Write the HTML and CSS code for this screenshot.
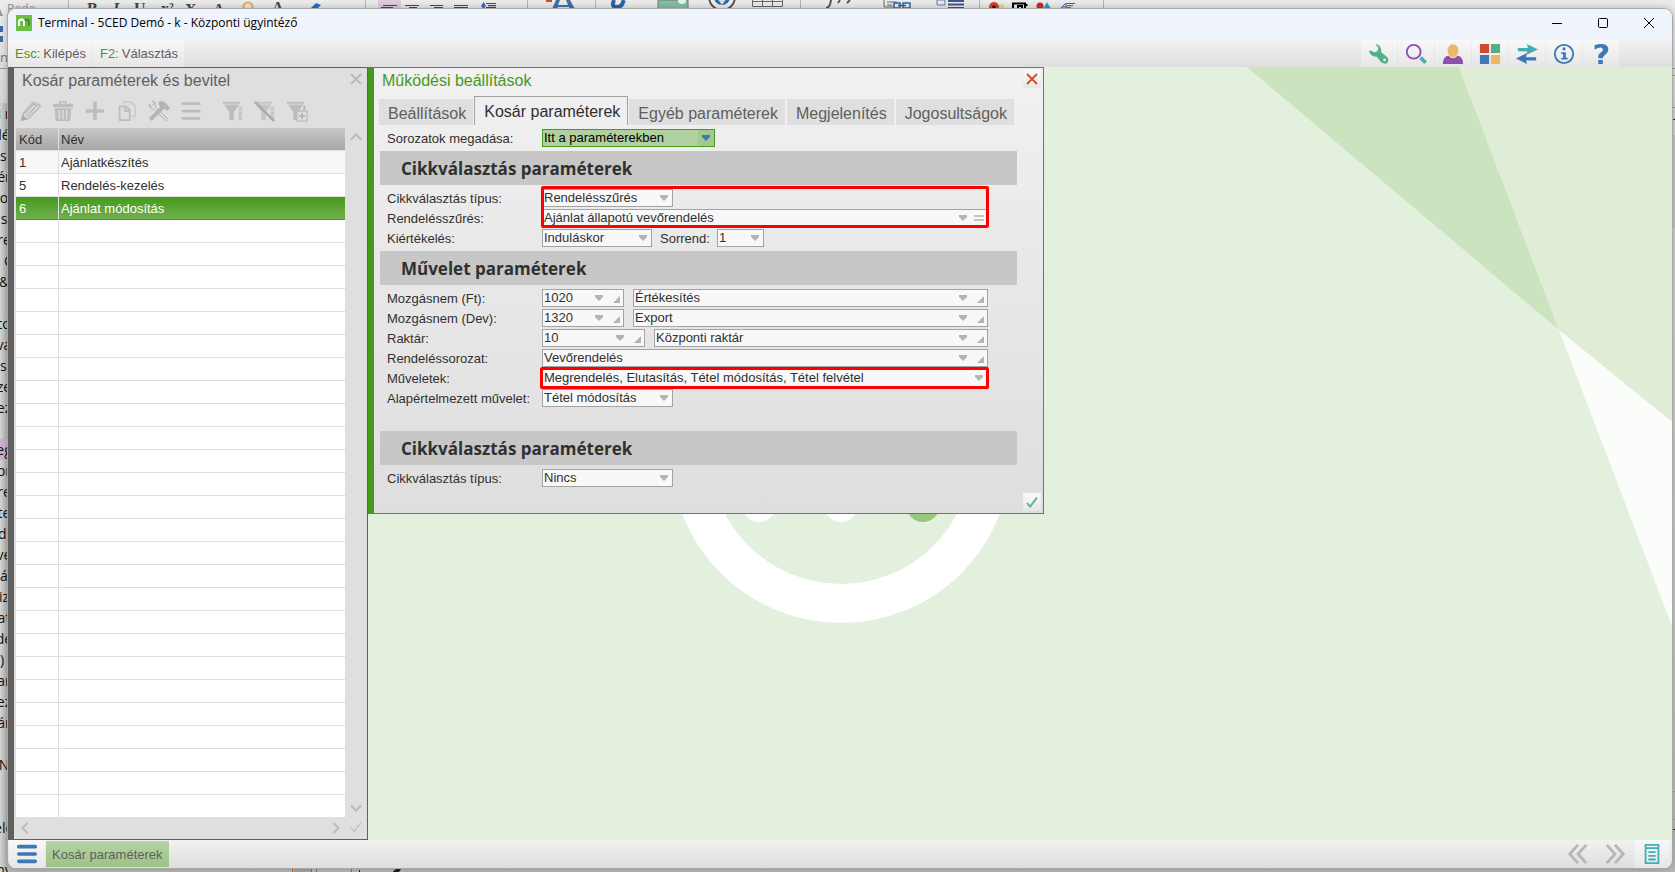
FILE: index.html
```html
<!DOCTYPE html>
<html lang="hu">
<head>
<meta charset="utf-8">
<title>Terminal - 5CED Demó - k - Központi ügyintéző</title>
<link rel="stylesheet" href="styles.css">
</head>
<body>
<svg class="symbols" aria-hidden="true">
  <symbol id="i-down" viewBox="0 0 16 16"><path d="M4 5h8v2l-4 4-4-4z" fill="currentColor"/></symbol>
  <symbol id="i-corner" viewBox="0 0 16 16"><path d="M6 13h7V6z" fill="currentColor"/></symbol>
  <symbol id="i-equals" viewBox="0 0 16 16"><path d="M3 6h10M3 10h10" stroke="currentColor" stroke-width="1.4"/></symbol>
  <symbol id="i-check" viewBox="0 0 18 18"><path d="M4 10l3.2 3.5L14 4.5" fill="none" stroke="currentColor" stroke-width="1.8"/></symbol>
  <symbol id="i-x" viewBox="0 0 18 18"><path d="M4 4l10 10M14 4L4 14" fill="none" stroke="currentColor" stroke-width="1.8"/></symbol>
  <symbol id="i-chev" viewBox="0 0 18 18"><path d="M4 11.5l5-5 5 5" fill="none" stroke="currentColor" stroke-width="2"/></symbol>
  <symbol id="i-funnel" viewBox="0 0 24 24"><path d="M1 2h19v2H1zM2 5h17l-6 8v9h-5v-9z" fill="currentColor"/></symbol>
</svg>

<div class="desktop" aria-hidden="true">
  <svg class="ribbon" width="1200" height="75" viewBox="0 0 1200 75">
    <rect x="378" y="0" width="23" height="9" fill="#dfcbdf"/>
    <g stroke="#b4b4b4"><path d="M68.500 0v9M365.500 0v9M527.500 0v9M595.500 0v9M800.500 0v9M979.500 0v9M1103.500 0v9"/></g>
    <path d="M0 9L3 16H0z" fill="#999"/>
    <g font-family="Liberation Serif, serif" font-size="16" font-weight="bold" fill="#444">
      <text x="87" y="14">B</text><text x="113" y="14" font-style="italic">I</text><text x="134" y="14">U</text><text x="161" y="14">x²</text><text x="185" y="15">X</text><text x="213" y="15">A</text><text x="272" y="13">A</text>
    </g>
    <text x="7" y="13" font-family="Open Sans, sans-serif" font-size="12" fill="#999" text-decoration="underline">Redo</text>
    <circle cx="248" cy="7" r="4.500" fill="none" stroke="#e6ad4d" stroke-width="2"/>
    <path d="M310 9l6-6 5 2-4 4z" fill="#2f6fc0"/>
    <g stroke="#3a4a72" stroke-width="1.200"><path d="M383 5.500h14M381 7.700h12M405 5.500h14M409 7.700h8M430 5.500h13M434 7.700h9M454 5.500h14M454 7.700h14M486 3.500h10M488 5.700h8M486 7.700h10"/></g>
    <path d="M481 6l2.500-4 2.500 4-2.500 3z" fill="#3f67c5"/>
    <path d="M546 0h6v2h-6z" fill="#d7472d"/>
    <path d="M552 9l4-9h4l-2 5h10l-2-5h4l5 9h-5l-1-2h-11l-1 2z" fill="#3a72ad"/>
    <path d="M614 0l-1 3q-1 4 4 4t6-5l1-2" fill="none" stroke="#2a66a5" stroke-width="4"/>
    <rect x="658" y="0" width="30" height="9" fill="#85bfa6" stroke="#777"/><circle cx="682" cy="0" r="4" fill="#e6f2ec"/>
    <circle cx="722" cy="-3" r="13" fill="#eee" stroke="#555" stroke-width="2"/><circle cx="722" cy="-3" r="8" fill="#2e6ca8"/><path d="M717-2l5 7 5-7z" fill="#ddd"/>
    <path d="M752.500-3v9.500h30V-3M752 1.500h31M762.500 0v6M772.500 0v6" fill="none" stroke="#666"/>
    <path d="M826 8q4 0 5-8M840 0l-2 3M850 0l-3 3" fill="none" stroke="#555" stroke-width="2"/>
    <path d="M884 0v7h9M887 2h10M887 5h5" stroke="#666" fill="none"/><path d="M894 3h6v5h-6zM903 3h7v5h-7zM898 5.500h8" fill="none" stroke="#2a66a5" stroke-width="1.500"/>
    <path d="M937 0h8v5h-8z" fill="none" stroke="#6d7ba5"/><path d="M948 1h16M948 4.500h16M948 7.800h16" stroke="#3f5688" stroke-width="1.800"/>
    <circle cx="994" cy="7" r="5" fill="#d7472d"/><circle cx="994" cy="7" r="1.800" fill="#500"/><path d="M999 4h5v5h-5z" fill="#e3dc95"/>
    <path d="M1013 9V3.500h12V9M1018 6h4v3h-4zM1026.500 4v2" fill="none" stroke="#000" stroke-width="2"/>
    <circle cx="1040" cy="6" r="3.500" fill="#c92b2b"/><path d="M1043 9l4-7 4 7z" fill="#2f9bd0"/>
    <path d="M1061 8l5-5v5M1062 7h5M1067 3.500h8M1067 5.700h6M1067 7.700h4" fill="none" stroke="#4b5b9b"/>
    <path d="M0 26h3v6H0zM0 36h3v6H0z" fill="#3c69a8"/>
    <path d="M0 68.500h8" stroke="#999"/>
    <text x="0" y="62" font-family="Open Sans, sans-serif" font-size="13" fill="#777">ng</text>
  </svg>
  <ol class="doc-edge">
    <li>i r</li><li>lé</li><li class="s">s</li><li>ér</li><li>o</li><li>s</li><li>re</li><li class="e">C</li><li>&amp;</li><li></li><li>to</li><li>vá</li><li class="s">s</li><li>ze</li><li>ez</li><li></li><li class="hl">eg</li><li>or</li><li>re</li><li>te</li><li>di</li><li>vé</li><li>á</li><li>iz</li><li>at</li><li>de</li><li class="s">)</li><li>ar</li><li>ez</li><li>ár</li><li></li><li>N</li><li></li><li></li><li>eld</li><li></li><li>ny</li>
  </ol>
  <svg class="under" width="420" height="4" viewBox="0 0 420 4"><path d="M292 0h1v4h-1z" fill="#c0641e"/><path d="M294 0h17v4h-17z" fill="#a4a4a4"/><path d="M311 0h1v4h-1zM316 0h1v4h-1zM351 0h1v4h-1z" fill="#777"/><path d="M359 2h1v2h-1zM393 4q2-4 8-3l-2 3z" fill="#222"/></svg>
  <svg class="right-edge" width="3" height="872" viewBox="0 0 3 872"><path d="M0 135h3v93H0z" fill="#c6c6ca"/><path d="M0 68.500h3M0 75.500h3M0 107.500h3M0 791.500h3M0 819.500h3" stroke="#999"/><path d="M0 829.500h3M1 119.500h2" stroke="#333"/></svg>
</div>

<main class="window">
  <header class="titlebar">
    <svg class="logo" viewBox="0 0 16 16"><path d="M0 0h16v16H0z" fill="#6fbe44"/><path d="M8.500 11V7q0-2.500 2.200-2.500T13 7v4" fill="none" stroke="#3f9326" stroke-width="2"/><path d="M3 11V7q0-2.500 2.500-2.500T8 7v4" fill="none" stroke="#fff" stroke-width="2"/></svg>
    <h1>Terminal - 5CED Demó - k - Központi ügyintéző</h1>
    <button class="sys" aria-label="Kis méret"><svg viewBox="0 0 12 12"><path d="M1 6.500h10" stroke="#000"/></svg></button>
    <button class="sys" aria-label="Teljes méret"><svg viewBox="0 0 12 12"><rect x="1.500" y="1.500" width="9" height="9" rx="1" fill="none" stroke="#000"/></svg></button>
    <button class="sys" aria-label="Bezárás"><svg viewBox="0 0 12 12"><path d="M1 1l10 10M11 1L1 11" stroke="#000"/></svg></button>
  </header>

  <nav class="commands">
    <button class="cmd"><b>Esc:</b> Kilépés</button>
    <button class="cmd"><b>F2:</b> Választás</button>
    <span class="spacer"></span>
    <button class="tool" aria-label="Beállítás"><svg viewBox="0 0 24 24"><path d="M9 1q6 2 5.500 9l6 5q3 3 1 6t-7 0l-5-6q-6 0-8.500-6l2-1q1 2 4 2t4-3-2-4z" fill="#54ae8a"/><circle cx="18" cy="18.500" r="1.500" fill="#eee"/></svg></button>
    <button class="tool" aria-label="Keresés"><svg viewBox="0 0 24 24"><circle cx="9.500" cy="9.500" r="7.500" fill="none" stroke="#8f4fac" stroke-width="2"/><path d="M17 16l5.500 5.500" stroke="#45adb5" stroke-width="4"/></svg></button>
    <button class="tool" aria-label="Felhasználó"><svg viewBox="0 0 24 24"><path d="M1 23q0-8 6-9h10q6 1 6 9z" fill="#8f4fac"/><ellipse cx="12" cy="8.500" rx="6.500" ry="7.500" fill="#ecb865" stroke="#efefef"/></svg></button>
    <button class="tool" aria-label="Modulok"><svg viewBox="0 0 24 24"><path d="M1 1h10v10H1z" fill="#cf4a30"/><path d="M13 1h10v10H13z" fill="#54ae8a"/><path d="M1 13h10v10H1z" fill="#3d78b7"/><path d="M13 13h10v10H13z" fill="#ecb865"/></svg></button>
    <button class="tool" aria-label="Csere"><svg viewBox="0 0 24 24"><path d="M2 5.500h11L12 1l12 6-12 5.500V9H2z" fill="#45adb5"/><path d="M22 15.500H11l1-4.500L0 17l12 6-1-4h11z" fill="#3d78b7"/></svg></button>
    <button class="tool" aria-label="Információ"><svg viewBox="0 0 24 24" fill="#3d78b7"><circle cx="12" cy="12" r="10" fill="none" stroke="#3d78b7" stroke-width="2"/><path d="M10.500 5h3v3h-3zM9 10h5v6h2v2H9v-2h2v-4H9z"/></svg></button>
    <button class="tool" aria-label="Súgó"><svg viewBox="0 0 24 24" fill="#3d78b7"><path d="M5 2.500Q9 1 12 1q8 0 8 6 0 3.500-3 5.500t-3 4H9q-.5-4 2.500-6t2.500-3.500Q14 5 11.500 5T5 7zM9 18.500h5V23H9z"/></svg></button>
  </nav>

  <div class="workspace">
    <svg class="art" viewBox="8 67 1664 773" preserveAspectRatio="xMidYMid slice" aria-hidden="true">
      <path d="M1247 67h212l100 263z" fill="#cbe4bf"/>
      <path d="M1459 67h213v355l-113-92z" fill="#dfecd6"/>
      <path d="M1559 330l113 92v204z" fill="#fafdfa"/>
      <circle cx="841" cy="453" r="150.500" fill="none" stroke="#fff" stroke-width="39"/>
      <circle cx="759" cy="505" r="17" fill="#fff"/><circle cx="841" cy="505" r="17" fill="#fff"/><circle cx="923" cy="505" r="17" fill="#97c87e"/>
    </svg>

    <section class="list-panel">
      <header class="list-head"><h2>Kosár paraméterek és bevitel</h2><button class="mini" aria-label="Bezárás"><svg><use href="#i-x"/></svg></button></header>
      <div class="list-tools">
        <button aria-label="Módosítás"><svg viewBox="0 0 24 24"><path d="M2 22l2-8L14 3l3 3M2 22l7-2L22 7l-2-3-13 14M17 2L5 15" fill="none" stroke="#bdbdbd" stroke-width="2"/><path d="M1 23l2-7 5 5z" fill="#aaa"/></svg></button>
        <button aria-label="Törlés"><svg viewBox="0 0 24 24" fill="#bdbdbd"><path d="M1 4h7V1h8v3h7v4H1zM3 9h18l-1 14H4zM10 2.500V4h4V2.500z" fill-rule="evenodd"/><path d="M8 11v10M12 11v10M16 11v10" stroke="#dfdfdf" stroke-width="1.500"/></svg></button>
        <button aria-label="Új"><svg viewBox="0 0 24 24"><path d="M12 2v20M2 12h20" stroke="#bdbdbd" stroke-width="4"/></svg></button>
        <button aria-label="Másolás"><svg viewBox="0 0 24 24" fill="none" stroke="#bdbdbd" stroke-width="2"><path d="M8 5V2h8l5 5v11h-4" stroke="#cdcdcd"/><path d="M4 7h7l4 4v11H4zM10 7v5h5"/></svg></button>
        <button aria-label="Eszközök"><svg viewBox="0 0 24 24"><path d="M5 1q4 2 3 7l14 13-2 2L6 10Q2 10 1 5l3 2 3-3z" fill="#e2e2e2" stroke="#aaa"/><path d="M1 20L13 8l-2-6q6-2 9 2l4 5-3 3-3-3L4 23z" fill="#b4b4b4"/></svg></button>
        <button aria-label="Menü"><svg viewBox="0 0 24 24"><path d="M3 4h18M3 12h18M3 20h18" stroke="#bdbdbd" stroke-width="3" stroke-linecap="round"/></svg></button>
        <button class="gap" aria-label="Szűrő"><svg viewBox="0 0 24 24" color="#bdbdbd"><use href="#i-funnel"/><path d="M20 8v15" stroke="#bdbdbd" stroke-width="4" stroke-dasharray="1.500 1"/></svg></button>
        <button aria-label="Szűrő törlése"><svg viewBox="0 0 24 24" color="#c6c6c6"><use href="#i-funnel"/><path d="M20 8v15" stroke="#bdbdbd" stroke-width="4" stroke-dasharray="1.500 1"/><path d="M1 2l21 21" stroke="#aaa" stroke-width="2.500"/></svg></button>
        <button aria-label="Szűrő hozzáadása"><svg viewBox="0 0 24 24" color="#bdbdbd"><use href="#i-funnel"/><path d="M12 12h11v11H12z" fill="#dfdfdf" stroke="#bdbdbd" stroke-width="1.500"/><path d="M17.500 14v7M14 17.500h7M20 6v5" stroke="#b4b4b4" stroke-width="2"/></svg></button>
      </div>
      <div class="list-body">
        <div class="rows">
          <table>
            <thead><tr><th class="code">Kód</th><th>Név</th></tr></thead>
            <tbody id="records">
              <tr class="alt"><td>1</td><td>Ajánlatkészítés</td></tr>
              <tr><td>5</td><td>Rendelés-kezelés</td></tr>
              <tr class="selected"><td>6</td><td>Ajánlat módosítás</td></tr>
            </tbody>
          </table>
        </div>
        <div class="vscroll"><button class="mini" aria-label="Fel"><svg><use href="#i-chev"/></svg></button><button class="mini flip" aria-label="Le"><svg><use href="#i-chev"/></svg></button></div>
        <div class="hscroll"><button class="mini left" aria-label="Balra"><svg><use href="#i-chev"/></svg></button><button class="mini right" aria-label="Jobbra"><svg><use href="#i-chev"/></svg></button></div>
        <button class="mini pale" aria-label="Rendben"><svg><use href="#i-check"/></svg></button>
      </div>
    </section>

    <section class="dialog">
      <header class="dialog-head"><h2>Működési beállítások</h2><button class="box red" aria-label="Bezárás"><svg><use href="#i-x"/></svg></button></header>
      <div class="tabs" role="tablist">
        <button role="tab">Beállítások</button><button role="tab" class="active" aria-selected="true">Kosár paraméterek</button><button role="tab">Egyéb paraméterek</button><button role="tab">Megjelenítés</button><button role="tab">Jogosultságok</button>
      </div>
      <form class="form">
        <div class="row"><label for="f1">Sorozatok megadása:</label><span class="field w-l focus"><select id="f1"><option>Itt a paraméterekben</option></select><svg><use href="#i-down"/></svg></span></div>
        <h3>Cikkválasztás paraméterek</h3>
        <div class="group">
          <div class="group marked tall">
            <div class="row"><label for="f2">Cikkválasztás típus:</label><span class="field w-m"><select id="f2"><option>Rendelésszűrés</option></select><svg><use href="#i-down"/></svg></span></div>
            <div class="row"><label for="f3">Rendelésszűrés:</label><span class="field fill"><select id="f3"><option>Ajánlat állapotú vevőrendelés</option></select><svg><use href="#i-down"/></svg><svg><use href="#i-equals"/></svg></span></div>
          </div>
          <div class="row"><label for="f4">Kiértékelés:</label><span class="field w-s"><select id="f4"><option>Induláskor</option></select><svg><use href="#i-down"/></svg></span><label class="inline" for="f5">Sorrend:</label><span class="field w-xs"><select id="f5"><option>1</option></select><svg><use href="#i-down"/></svg></span></div>
        </div>
        <h3>Művelet paraméterek</h3>
        <div class="group last">
          <div class="row"><label for="f6">Mozgásnem (Ft):</label><span class="field w-code"><input id="f6" value="1020"><svg><use href="#i-down"/></svg><svg><use href="#i-corner"/></svg></span><span class="field fill next"><input aria-label="Mozgásnem (Ft) neve" value="Értékesítés"><svg><use href="#i-down"/></svg><svg><use href="#i-corner"/></svg></span></div>
          <div class="row"><label for="f7">Mozgásnem (Dev):</label><span class="field w-code"><input id="f7" value="1320"><svg><use href="#i-down"/></svg><svg><use href="#i-corner"/></svg></span><span class="field fill next"><input aria-label="Mozgásnem (Dev) neve" value="Export"><svg><use href="#i-down"/></svg><svg><use href="#i-corner"/></svg></span></div>
          <div class="row"><label for="f8">Raktár:</label><span class="field w-store"><input id="f8" value="10"><svg><use href="#i-down"/></svg><svg><use href="#i-corner"/></svg></span><span class="field fill next"><input aria-label="Raktár neve" value="Központi raktár"><svg><use href="#i-down"/></svg><svg><use href="#i-corner"/></svg></span></div>
          <div class="row"><label for="f9">Rendeléssorozat:</label><span class="field fill"><input id="f9" value="Vevőrendelés"><svg><use href="#i-down"/></svg><svg><use href="#i-corner"/></svg></span></div>
          <div class="row marked"><label for="f10">Műveletek:</label><span class="field fill"><select id="f10"><option>Megrendelés, Elutasítás, Tétel módosítás, Tétel felvétel</option></select><svg><use href="#i-down"/></svg></span></div>
          <div class="row"><label for="f11">Alapértelmezett művelet:</label><span class="field w-m"><select id="f11"><option>Tétel módosítás</option></select><svg><use href="#i-down"/></svg></span></div>
        </div>
        <h3>Cikkválasztás paraméterek</h3>
        <div class="row"><label for="f12">Cikkválasztás típus:</label><span class="field w-m"><select id="f12"><option>Nincs</option></select><svg><use href="#i-down"/></svg></span></div>
      </form>
      <footer class="dialog-foot"><button class="box ok" aria-label="Rendben"><svg><use href="#i-check"/></svg></button></footer>
    </section>
  </div>

  <footer class="statusbar">
    <button class="tool" aria-label="Főmenü"><svg viewBox="0 0 24 24"><path d="M3 4h18M3 12h18M3 20h18" stroke="#3d78b7" stroke-width="4" stroke-linecap="round"/></svg></button>
    <button class="task">Kosár paraméterek</button>
    <span class="spacer"></span>
    <button class="flat" aria-label="Előző"><svg viewBox="0 0 24 24"><path d="M12 2L3 12l9 10M21 2l-9 10 9 10" fill="none" stroke="#b6b6b6" stroke-width="3"/></svg></button>
    <button class="flat" aria-label="Következő"><svg viewBox="0 0 24 24"><path d="M3 2l9 10-9 10M12 2l9 10-9 10" fill="none" stroke="#b6b6b6" stroke-width="3"/></svg></button>
    <button class="tool" aria-label="Napló"><svg viewBox="0 0 24 24"><path d="M5 2h14v20H5zM5 5.500h14M8 10h8M8 14h8M8 18h8" fill="none" stroke="#45adb5" stroke-width="2"/></svg></button>
  </footer>
</main>
<script src="rows.js"></script>
</body>
</html>
```
FILE: rows.js
```js
// Pad the record list with blank lines so the grid runs to the bottom of the panel.
const records = document.getElementById("records");
const pane = records.closest(".rows");
while (records.parentElement.offsetHeight < pane.clientHeight) {
  const line = records.insertRow();
  line.insertCell();
  line.insertCell();
}
```
FILE: styles.css
```css
* { box-sizing: border-box; }

body {
  margin: 0;
  height: 100vh;
  padding: 9px 3px 4px 8px;
  position: relative;
  overflow: hidden;
  background: #e6e6e6;
  font-family: "Liberation Sans", Arial, sans-serif;
  font-size: 13px;
  color: #303030;
}

h1, h2, h3 { margin: 0; font-weight: normal; }
button { margin: 0; padding: 0; border: 0; background: none; font: inherit; color: inherit; display: flex; align-items: center; }
svg { display: block; flex: none; }
.symbols { position: absolute; width: 0; height: 0; }
.spacer { flex: 1; }

/* Desktop behind the window */
.desktop { position: absolute; inset: 0; overflow: hidden; background: linear-gradient(#ececec, #d4d4d4 120px, #c8c8c8 70%, #b8b8b8); }
.ribbon { position: absolute; left: 0; top: 0; }
.under { position: absolute; left: 0; bottom: 0; }
.right-edge { position: absolute; right: 0; top: 0; }
.doc-edge {
  position: absolute; left: 0; top: 103px; width: 8px; margin: 0; padding: 0; list-style: none;
  font: 14px/21px "Open Sans", sans-serif; color: #111;
  background: linear-gradient(90deg, #d6d6d6, #b0b0b0);
}
.doc-edge li { height: 21px; display: flex; justify-content: center; overflow: hidden; white-space: nowrap; }
.doc-edge .s { justify-content: flex-start; }
.doc-edge .e { padding-left: 4px; justify-content: flex-start; }
.doc-edge .hl { background: #cdb4cd; }

/* Window */
.window {
  position: relative; height: 100%; display: flex; flex-direction: column; overflow: hidden;
  border-radius: 8px; background: #e4f0de;
  box-shadow: 0 0 0 1px #a9a9a9, 0 0 8px rgba(0, 0, 0, .3);
}
.titlebar { flex: none; height: 31px; display: flex; align-items: center; padding: 0 0 3px 8px; background: #eff3fb; }
.titlebar h1 { flex: 1; margin-left: 6px; font: 12px/16px "Open Sans", sans-serif; color: #000; }
.logo { width: 16px; height: 16px; }
.sys { width: 46px; height: 28px; justify-content: center; }
.sys svg { width: 12px; height: 12px; }

.commands, .statusbar { flex: none; display: flex; gap: 1px; background: linear-gradient(#f1f1f1, #dedede); }
.commands { height: 27px; padding-right: 53px; }
.statusbar { height: 28px; padding: 0 2px 0 1px; }
.cmd { padding: 0 6px 0 7px; gap: 3px; background: linear-gradient(#f8f8f8, #e6e6e6); color: #5e5e5e; }
.cmd b { font-weight: normal; color: #459a1c; }
.tool, .flat { width: 36px; justify-content: center; }
.tool { background: linear-gradient(#f8f8f8, #e6e6e6); }
.tool svg, .flat svg { width: 24px; height: 22px; }
.task { margin: 1px 0; padding: 0 6px; background: linear-gradient(#b6d4a6, #9bc386); color: #5e5e5e; }

.workspace { position: relative; flex: 1; min-height: 0; display: flex; align-items: flex-start; }
.art { position: absolute; inset: 0; width: 100%; height: 100%; }

/* Record list */
.list-panel {
  position: relative; flex: none; align-self: stretch; width: 360px; display: flex; flex-direction: column;
  border: 1px solid #606060; border-left-width: 6px; background: #dfdfdf; color: #303030;
}
.list-head { display: flex; justify-content: space-between; height: 28px; padding: 2px 2px 0 8px; }
.list-head h2 { font-size: 16px; line-height: 22px; color: #606060; }
.mini { width: 18px; height: 18px; color: #b9b9b9; }
.mini svg, .box svg { width: 18px; height: 18px; }
.flip svg { transform: rotate(180deg); }
.left svg { transform: rotate(-90deg); }
.right svg { transform: rotate(90deg); }
.pale { margin: 1px 2px; color: #c6c6c6; }
.list-tools { flex: none; display: flex; align-items: flex-start; gap: 8px; height: 32px; padding: 4px 0 0 5px; }
.list-tools svg { width: 24px; height: 22px; }
.list-tools .gap { margin-left: 10px; }
.list-body { flex: 1; min-height: 0; display: grid; grid-template: minmax(0, 1fr) 22px / 1fr 22px; padding-left: 2px; }
.rows { overflow: hidden; background: #fff; }
.vscroll { display: flex; flex-direction: column; justify-content: space-between; padding: 0 2px; }
.hscroll { display: flex; justify-content: space-between; align-items: center; }
table { width: 100%; border-collapse: separate; border-spacing: 0; table-layout: fixed; }
th, td { height: 23px; padding: 0 3px 0 2px; text-align: left; font-weight: normal; border-bottom: 1px solid #dfdfdf; border-left: 1px solid #dfdfdf; }
th:first-child, td:first-child { border-left: 0; padding-left: 3px; }
th { background: linear-gradient(#c8c8c8, #a6a6a6); }
.code { width: 42px; }
.alt td { background: #f7f7f7; }
.selected td { background: linear-gradient(#459a1c, #70b04d); color: #fff; border-bottom-color: #459a1c; }

/* Settings dialog */
.dialog {
  position: relative; flex: 0 1 676px; border: 1px solid #459a1c; border-left-width: 6px;
  background: linear-gradient(#f1f1f1, #dedede);
}
.dialog-head { display: flex; justify-content: space-between; height: 28px; padding: 2px 2px 0 8px; }
.dialog-head h2 { font-size: 16px; line-height: 22px; color: #459a1c; }
.box { width: 18px; height: 18px; background: linear-gradient(#fafafa, #e6e6e6); }
.red { color: #d24b31; }
.ok { color: #54ae8a; }
.tabs { display: flex; align-items: flex-end; gap: 2px; height: 29px; padding-left: 5px; }
.tabs button { height: 26px; padding: 3px 7px 0 9px; background: #dfdfdf; font-size: 16px; color: #606060; white-space: nowrap; }
.tabs .active { height: 29px; margin: 0 -1px; padding-top: 2px; border: 1px solid #a3a3a3; border-bottom: 0; background: #efefef; color: #303030; }
.form { margin: 4px 26px 0 6px; display: flex; flex-direction: column; gap: 4px; }
.form h3 { height: 34px; padding-left: 21px; background: #c7c7c7; font: bold 17px/35px "Open Sans", sans-serif; }
.group { display: flex; flex-direction: column; gap: 2px; }
.last { padding-bottom: 20px; }
.row { display: flex; align-items: center; height: 18px; padding: 0 29px 0 7px; }
.row label { flex: none; width: 155px; }
.row .inline { width: 65px; padding-left: 8px; }
.field { flex: none; display: flex; height: 18px; border: 1px solid #a3a3a3; background: #f8f8f8; color: #b4b4b4; }
.field svg { width: 16px; height: 16px; }
.field input, .field select {
  flex: 1; min-width: 0; width: 0; margin: 0; padding: 0 0 0 1px; border: 0; outline: 0; border-radius: 0;
  appearance: none; background: none; font: inherit; line-height: 16px; color: #303030;
}
.row .fill { flex: 1 1 0; }
.next { margin-left: 9px; }
.w-xs { width: 47px; }
.w-code { width: 82px; }
.w-store { width: 103px; }
.w-s { width: 110px; }
.w-m { width: 131px; }
.w-l { width: 173px; }
.focus { border-color: #459a1c; background: #b0d09f; color: #3d78b7; }
.focus select { color: #000; }
.focus svg { background: #a2c98e; }
.marked { position: relative; }
.marked::after { content: ""; position: absolute; inset: -2px 28px -2px 160px; border: 3px solid #f00; border-radius: 2px; pointer-events: none; }
.tall::after { inset: -3px 28px -1px 161px; }
.dialog-foot { display: flex; justify-content: flex-end; padding: 6px 2px 2px; }
```
